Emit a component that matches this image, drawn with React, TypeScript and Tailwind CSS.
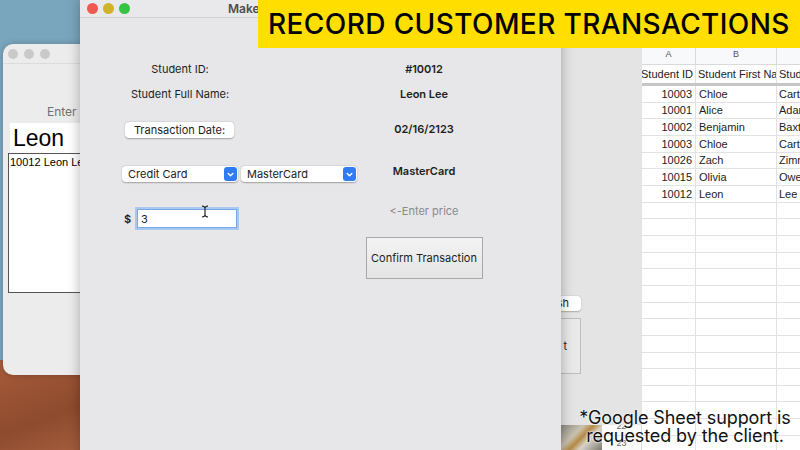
import React from "react";

const rowsData: [string, string, string][] = [
  ["10003", "Chloe", "Carter"],
  ["10001", "Alice", "Adams"],
  ["10002", "Benjamin", "Baxter"],
  ["10003", "Chloe", "Carter"],
  ["10026", "Zach", "Zimmer"],
  ["10015", "Olivia", "Owens"],
  ["10012", "Leon", "Lee"],
];

function Sheet() {
  const rows = Array.from({ length: 22 }, (_, i) => rowsData[i] ?? ["", "", ""]);
  return (
    <div className="absolute left-[602px] top-[45px] w-[198px] h-[405px] bg-white font-['Liberation_Sans'] text-[11px] text-[#222]">
      <div className="flex h-[20px] border-b border-[#dadada] bg-[#f8f9fa] text-[9px] text-[#555]">
        <div className="w-[40px] border-r border-[#dadada]" />
        <div className="w-[54px] border-r border-[#dadada] flex items-center justify-center">A</div>
        <div className="w-[81px] border-r border-[#dadada] flex items-center justify-center">B</div>
        <div className="flex-1" />
      </div>
      <div className="flex h-[21px] border-b-[3px] border-[#c6c6c6]">
        <div className="w-[40px] border-r border-[#dadada] bg-[#f8f9fa] text-[9px] text-[#666] flex items-center justify-center">1</div>
        <div className="w-[54px] border-r border-[#e2e2e2] flex items-center justify-end pr-[2px] whitespace-nowrap overflow-hidden">Student ID</div>
        <div className="w-[81px] border-r border-[#e2e2e2] flex items-center pl-[2px] whitespace-nowrap overflow-hidden">Student First Na</div>
        <div className="flex-1 flex items-center pl-[2px] whitespace-nowrap overflow-hidden">Student Last Name</div>
      </div>
      {rows.map((r, i) => (
        <div key={i} className="flex h-[16.67px] border-b border-[#e2e2e2]">
          <div className="w-[40px] border-r border-[#dadada] bg-[#fafafa] text-[9px] text-[#666] flex items-center justify-center">{i + 2}</div>
          <div className="w-[54px] border-r border-[#e2e2e2] flex items-center justify-end pr-[3px]">{r[0]}</div>
          <div className="w-[81px] border-r border-[#e2e2e2] flex items-center pl-[3px] whitespace-nowrap overflow-hidden">{r[1]}</div>
          <div className="flex-1 flex items-center pl-[2px] whitespace-nowrap overflow-hidden">{r[2]}</div>
        </div>
      ))}
    </div>
  );
}

function Chevron() {
  return (
    <div className="w-[13px] h-[14px] rounded-[3px] bg-[#2f7cf6] flex items-center justify-center">
      <svg width="9" height="9" viewBox="0 0 9 9">
        <path d="M2.2 3.4 L4.5 5.7 L6.8 3.4" stroke="white" strokeWidth="1.4" fill="none" strokeLinecap="round" strokeLinejoin="round" />
      </svg>
    </div>
  );
}

function Select({ label }: { label: string }) {
  return (
    <div className="w-[116px] h-[16px] rounded-[4px] bg-white shadow-[0_0.5px_1.5px_rgba(0,0,0,0.3)] flex items-center justify-between pl-[6px] pr-[1px]">
      <span className="text-[11px] text-[#222]">{label}</span>
      <Chevron />
    </div>
  );
}

export default function App() {
  return (
    <div className="relative w-[800px] h-[450px] overflow-hidden bg-[#79a5bd] font-['Inter'] select-none [font-feature-settings:'calt'_0,'liga'_0]">
      {/* desktop wood */}
      <div className="absolute left-0 top-[360px] w-[100px] h-[90px] bg-[linear-gradient(160deg,#a65b3a,#8e4b2e_60%,#a7603f)]" />

      {/* spreadsheet */}
      <Sheet />

      {/* back window right part */}
      <div className="absolute left-[530px] top-[45px] w-[112px] h-[380px] bg-[#e4e4e4]">
        <div className="absolute left-[5px] top-[251px] w-[46px] h-[15px] rounded-[4px] bg-white shadow-[0_0.5px_1.5px_rgba(0,0,0,0.25)] flex items-center justify-end pr-[12px] text-[11px] text-[#222]">sh</div>
        <div className="absolute left-[5px] top-[273px] w-[46px] h-[56px] border border-[#bdbdbd] bg-[#e9e9e9] flex items-center justify-end pr-[13px] text-[11px] text-[#222]">t</div>
      </div>
      {/* photo thumbnail */}
      <div className="absolute left-[561px] top-[425px] w-[41px] h-[25px] bg-[linear-gradient(135deg,#8c8a82,#c9c2b0_35%,#b58a45_50%,#d8d3c6_65%,#7d7a72)]" />

      {/* back left window */}
      <div className="absolute left-[3px] top-[44px] w-[300px] h-[331px] rounded-[10px] bg-[#ececec] overflow-hidden shadow-[0_0_6px_rgba(0,0,0,0.2)]">
        <div className="h-[20px] flex items-center gap-[6px] pl-[5px] border-b border-[#dcdcdc]">
          <div className="w-[10px] h-[10px] rounded-full bg-[#c9c9c9]" />
          <div className="w-[10px] h-[10px] rounded-full bg-[#c9c9c9]" />
          <div className="w-[10px] h-[10px] rounded-full bg-[#c9c9c9]" />
        </div>
        <div className="pl-[44px] pt-[41px] text-[12px] leading-[14px] text-[#707070] whitespace-nowrap">Enter Student Name:</div>
        <div className="ml-[7px] mt-[4px] w-[200px] h-[30px] bg-white flex items-center pl-[3px] text-[23px] text-black font-['Liberation_Sans']">Leon</div>
        <div className="ml-[5px] w-[200px] h-[140px] bg-white border border-[#555] pl-[1px] pt-[2px] text-[11px] leading-[13px] text-black font-['Liberation_Sans'] whitespace-nowrap">10012 Leon Lee</div>
      </div>

      {/* front window */}
      <div className="absolute left-[80px] top-0 w-[481px] h-[470px] bg-[#e7e6e8] shadow-[0_0_12px_rgba(0,0,0,0.3)]">
        <div className="h-[18px] bg-[#e9e8ea] border-b border-[#d2d2d2] flex items-center pl-[7px] gap-[5px] relative">
          <div className="w-[11px] h-[11px] rounded-full bg-[#ee5a52]" />
          <div className="w-[11px] h-[11px] rounded-full bg-[#d0b22c]" />
          <div className="w-[11px] h-[11px] rounded-full bg-[#36c243]" />
          <div className="absolute left-[148px] top-[2px] text-[12px] leading-[14px] font-semibold text-[#4d4d4d] whitespace-nowrap">Make a Transaction</div>
        </div>
        <div className="flex text-[11px] leading-[14px] text-[#1d1d1d]">
          {/* left column */}
          <div className="ml-[40px] w-[240px] pt-[44px] flex flex-col items-start">
            <div className="w-[120px] h-[14px] text-center">Student ID:</div>
            <div className="w-[120px] h-[14px] mt-[11px] text-center whitespace-nowrap">Student Full Name:</div>
            <div className="ml-[5px] mt-[21px] w-[109px] h-[16px] rounded-[4px] bg-white shadow-[0_0.5px_1.5px_rgba(0,0,0,0.3)] flex items-center justify-center">Transaction Date:</div>
            <div className="ml-[2px] mt-[28px] flex gap-[3px]">
              <Select label="Credit Card" />
              <Select label="MasterCard" />
            </div>
            <div className="ml-[4px] mt-[27px] flex items-center h-[19px]">
              <span className="font-semibold w-[13px]">$</span>
              <div className="relative w-[100px] h-[19px] bg-white border border-[#7aa7e6] ring-[2px] ring-[#a9c8f0] flex items-center pl-[3px]">
                <span className="text-[11px]">3</span>
                <svg className="absolute left-[63px] top-[-5px]" width="8" height="13" viewBox="0 0 8 13">
                  <path d="M1 1 Q4 1.5 4 3 Q4 1.5 7 1 M4 3 V10 M1 12 Q4 11.5 4 10 Q4 11.5 7 12" stroke="#111" strokeWidth="1.1" fill="none" />
                </svg>
              </div>
            </div>
          </div>
          {/* right column */}
          <div className="ml-[4px] w-[120px] pt-[44px] flex flex-col items-center font-semibold">
            <div className="h-[14px]">#10012</div>
            <div className="h-[14px] mt-[11px]">Leon Lee</div>
            <div className="h-[14px] mt-[21px]">02/16/2123</div>
            <div className="h-[14px] mt-[28px]">MasterCard</div>
            <div className="h-[14px] mt-[26px] font-normal text-[#8a8a8a]">&lt;-Enter price</div>
            <div className="mt-[19px] w-[117px] h-[42px] border border-[#a8a8a8] bg-[linear-gradient(#f3f3f3,#e4e4e4)] flex items-center justify-center font-normal text-[#1d1d1d] whitespace-nowrap">Confirm Transaction</div>
          </div>
        </div>
      </div>

      {/* banner */}
      <div className="absolute left-[258px] top-0 w-[542px] h-[48px] bg-[#ffde00] flex items-center pl-[10px] overflow-hidden">
        <span className="text-[28px] leading-[28px] font-medium text-black whitespace-nowrap tracking-[0.4px]">RECORD CUSTOMER TRANSACTIONS</span>
      </div>

      {/* caption */}
      <div className="absolute left-[565px] top-[409px] w-[240px] text-center text-[18px] leading-[18px] tracking-[-0.1px] text-[#111] [text-shadow:0_0_2px_#fff,0_0_2px_#fff]">
        <div>*Google Sheet support is</div>
        <div>requested by the client.</div>
      </div>
    </div>
  );
}
